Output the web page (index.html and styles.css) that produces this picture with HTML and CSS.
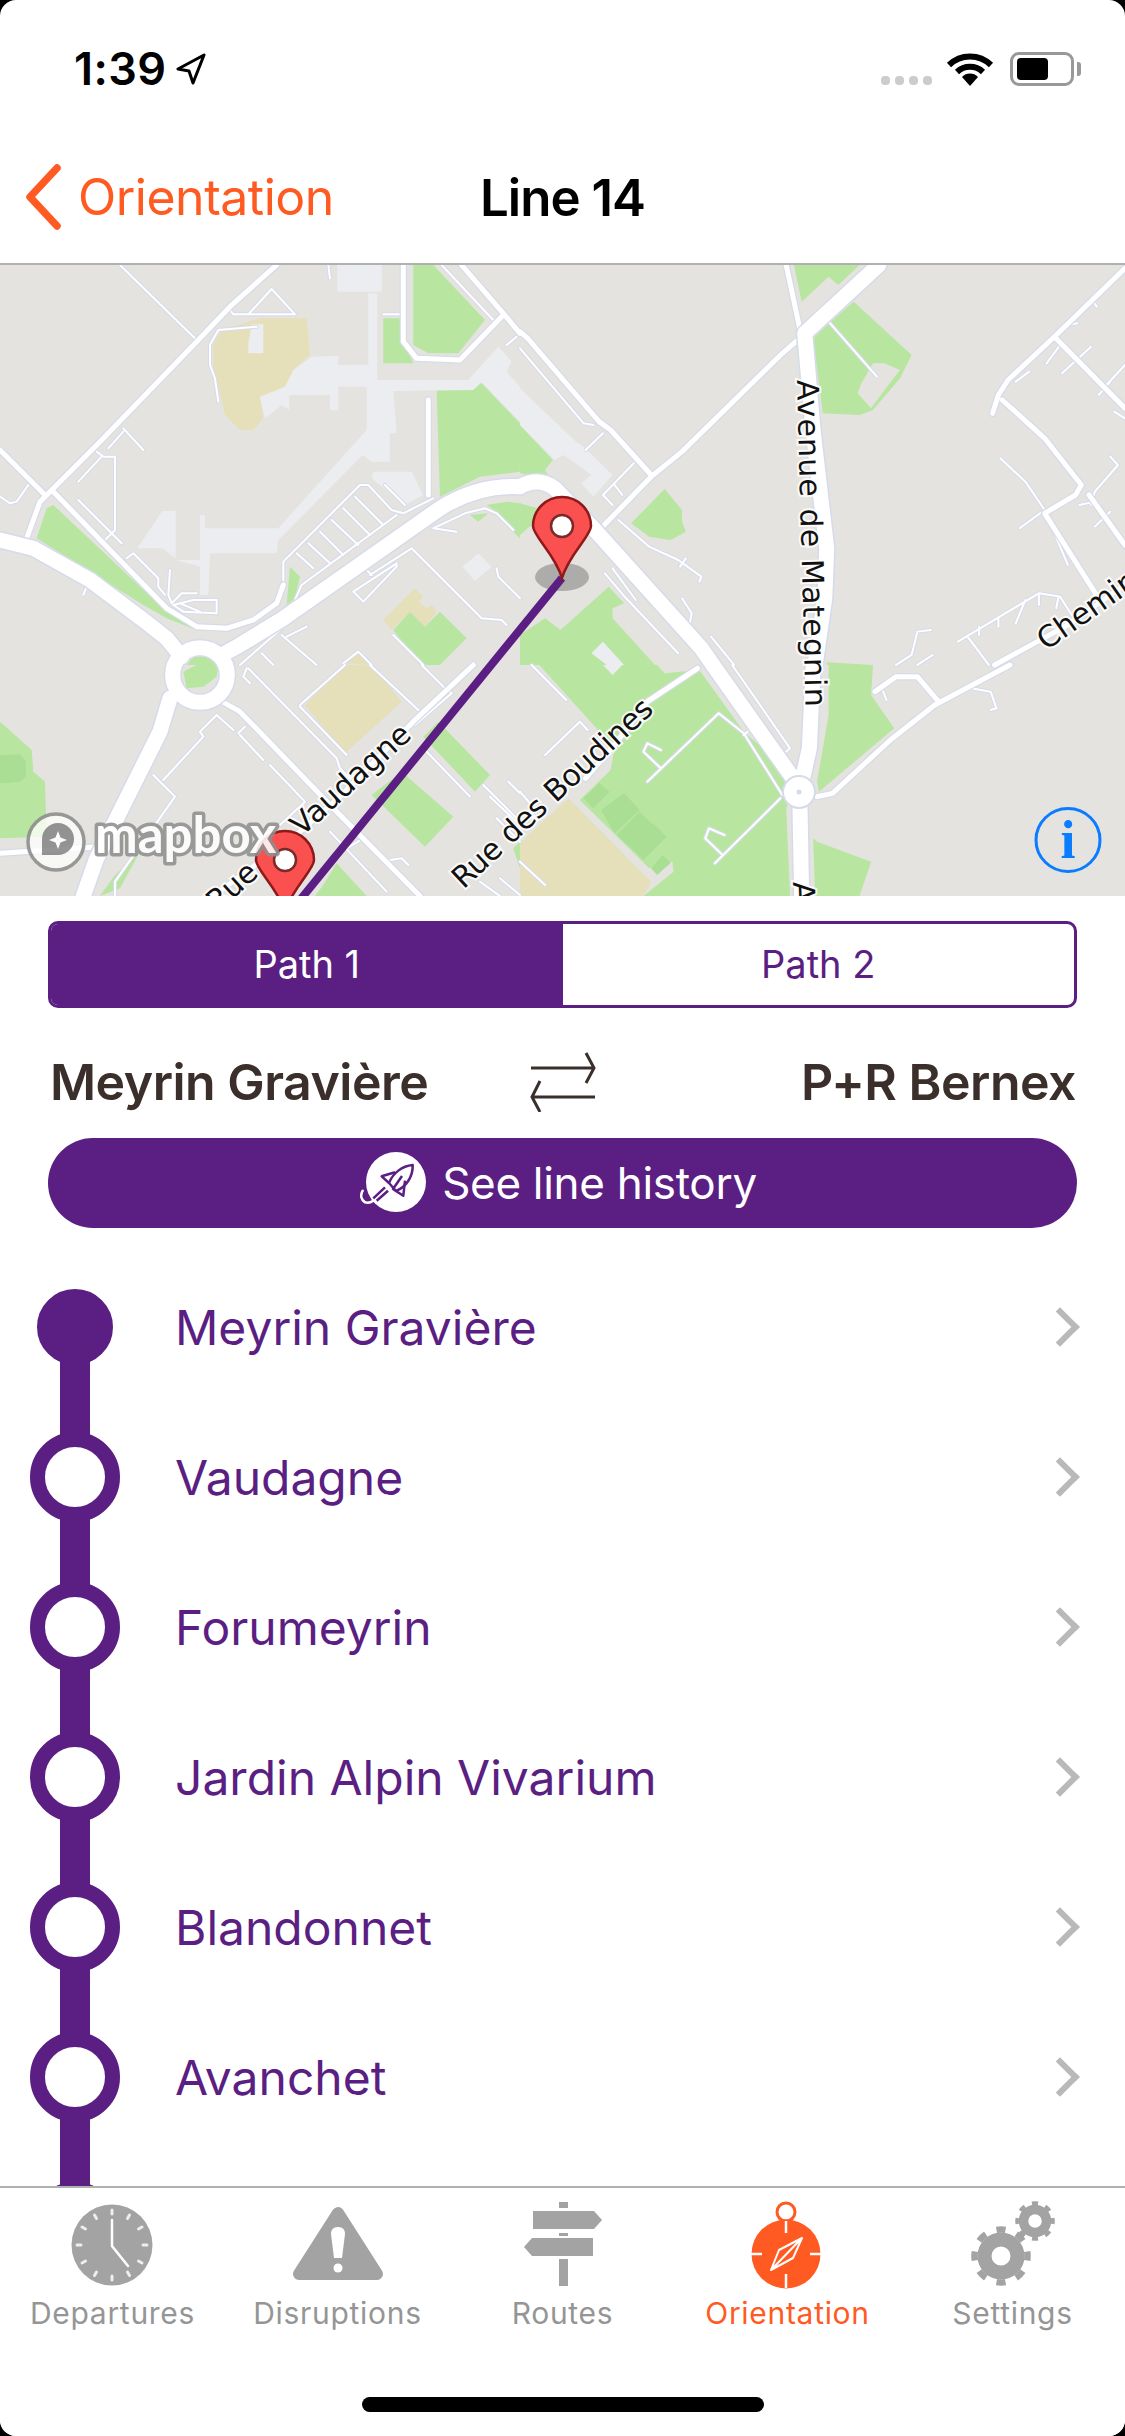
FILE: index.html
```html
<!DOCTYPE html>
<html lang="en">
<head>
<meta charset="utf-8">
<title>Line 14</title>
<link rel="stylesheet" href="styles.css">
</head>
<body>
<div class="screen">

<div class="status">
	<div class="clock">1:39
		<svg class="loc" width="30" height="32" viewBox="0 0 30 32"><path d="M28 2 2 16l11 2 4 12z" fill="none" stroke="#000" stroke-width="3" stroke-linejoin="round"/></svg>
	</div>
	<div class="status-right">
		<div class="signal"><i></i><i></i><i></i><i></i></div>
		<svg width="48" height="34" viewBox="0 0 48 34"><path d="M3 13a30 30 0 0 1 42 0" fill="none" stroke="#000" stroke-width="6"/><path d="M11 20a19 19 0 0 1 26 0" fill="none" stroke="#000" stroke-width="6"/><path d="M24 34 16 25a11 11 0 0 1 16 0z"/></svg>
		<div class="battery"><div class="battery-fill"></div></div>
		<div class="battery-nub"></div>
	</div>
</div>

<div class="nav">
	<div class="back">
		<svg width="40" height="66" viewBox="0 0 40 66"><path d="M33 4 6 33l27 29" fill="none" stroke="#ff5a22" stroke-width="7.500" stroke-linecap="round" stroke-linejoin="round"/></svg>
		<span>Orientation</span>
	</div>
	<div class="nav-title">Line 14</div>
</div>

<div class="map">
<svg width="1125" height="631" viewBox="0 0 1125 631">
	<defs>
		<g id="thin">
			<g class="q1">
				<path d="M360 0 590 225M745 148 815 72 885 148H700L690 135M985 0 990 40M1150 148H1210"/>
				<path d="M655 195 630 240V300L645 340 655 410M655 195 770 185"/>
				<path d="M370 490 430 555M370 500 325 550M290 560 310 575H345V795L315 825M305 575 235 650M235 705 365 835"/>
				<path d="M85 660 50 710 30 715 0 695M380 880 400 865 475 940V965L495 990M510 915 505 990 515 1015 545 985H590"/>
				<path d="M520 1020 550 1040 650 1045V1005H580L520 1020M540 1015 600 1040M260 965 250 990"/>
				<path d="M1155 660 1215 720M1065 695 1150 780M1030 730 1110 810M995 765 1075 840M960 800 1030 870M925 835 990 895M890 865 940 910"/>
				<path d="M905 960 1190 750M885 1005 905 960M1300 790 1395 745 1455 730 1490 745 1540 795M1300 790 1370 800"/>
				<path d="M860 1115 920 1085M845 1110 950 1200M785 1165 820 1200M720 1200 840 1095"/>
				<path d="M1235 850 1445 1060 1505 1065 1520 1080M1110 930 1235 850M1100 915 1115 930M1060 980 1190 895V905L1090 1010 1060 980"/>
				<path d="M1490 910 1495 935 1560 1000M1180 1110 1270 1200M1030 1195 1075 1160 1115 1200M1325 0 1480 165M1520 240 1550 215"/>
				<path d="M850 960V890L1080 660H1105L1175 735 1210 745 1300 700"/>
			</g>
			<g class="q2">
				<path d="M0 250 165 475 190 480M215 505 170 555M295 595 215 690 240 720M245 660 265 690"/>
				<path d="M255 765 335 845 410 885 470 935 465 950M430 880 415 905M800 170 925 335"/>
				<path d="M220 925 275 1000 410 1165M240 910 300 1005M420 1000 445 1045 440 1075M495 1115 555 1200"/>
				<path d="M1245 580 1310 650 1360 735 1295 790M1365 750 1420 900M1530 575 1550 600 1490 680 1480 720M1450 720 1490 710M1530 740 1490 785"/>
				<path d="M1568 300 1520 360M1480 100 1495 125M1420 180 1445 175M1480 245 1405 325M1400 240 1365 295M1320 320 1285 350M1500 390 1530 350M1568 460 1540 440"/>
				<path d="M1135 1130 1345 985 1400 995 1430 1050M1160 1115 1215 1200M1190 1110V1085M1240 1085V1060M1285 1075 1310 1005M1345 985V1020M1395 1000 1390 1030"/>
				<path d="M1065 1095 1030 1100 1015 1170 975 1200M1070 1170 1030 1200"/>
			</g>
			<g class="q3">
				<path d="M740 10 730 35 750 55M745 10 1010 280 1020 310 1060 350M1110 0 1255 135M1265 0 1330 65 1355 85 1245 180"/>
				<path d="M900 120 1035 0M900 125 1040 270M650 150 600 200 610 215 490 345M650 150 700 195M720 210 790 285M735 185 715 205"/>
				<path d="M810 300 915 410 840 480M460 330 525 395 345 650V693M1280 260 1410 395M1450 360 1560 470M1525 350 1560 385M1470 395 1560 480M1490 460 1560 530"/>
				<path d="M990 500 1160 680M1040 550 1090 520M1170 585 1205 580 1225 600M1440 650 1500 693M1500 640 1560 690"/>
			</g>
			<g class="q4">
				<path d="M30 0 120 105M155 170 65 270M155 170 175 195M515 145 330 350M515 145 580 205 680 390M590 200 580 210"/>
				<path d="M365 310 320 260 330 235 365 255M675 400 505 595M525 570 480 520 490 490 530 510M550 0 700 250 680 270"/>
				<path d="M1170 70 1220 80 1235 130 1220 135M940 75 950 105M0 380 30 420M0 590 65 660"/>
			</g>
		</g>
		<g id="medium">
			<g class="q1">
				<path d="M830 0 690 125 595 225 300 530 150 680 120 710 80 820M0 555 135 690M160 680 500 1030 590 1085 680 1090 760 1065 830 1015 850 960"/>
				<path d="M1210 0V230L1250 280 1380 285 1510 150M1385 0 1510 145 1560 205M1285 405V690"/>
			</g>
			<g class="q2">
				<path d="M0 200 20 220 205 470 235 495 340 630M720 225 680 265 420 560 340 635 210 790M690 0 725 190"/>
				<path d="M1568 10 1390 210 1265 345 1240 390 1225 445M1385 215 1568 430M1250 405 1360 520 1455 660 1440 690 1360 745 1500 1000M1475 690 1568 840"/>
				<path d="M1568 960 1420 1080 1230 1200"/>
			</g>
			<g class="q3">
				<path d="M640 95 720 140 1000 430 1260 693M1420 0 1240 170 1020 395 900 500 640 693M0 565 300 545"/>
			</g>
			<g class="q4">
				<path d="M1270 0 1075 120 960 225 810 385 770 395M920 80 975 35H1030L1085 110M460 10 330 110 245 240 170 340"/>
			</g>
		</g>
		<g id="thick">
			<g class="q1">
				<path d="M0 825 100 850 270 945 430 1065 500 1120 545 1175M1560 665C1480 660 1400 680 1320 730L850 1060 720 1140 665 1170"/>
			</g>
			<g class="q2">
				<path d="M0 665C30 645 60 645 90 670L190 790 470 1150 500 1200M930 0 738 205 760 500 795 850 790 1000 765 1200"/>
			</g>
			<g class="q3">
				<ellipse cx="600" cy="30" rx="82" ry="82"/>
				<path d="M510 100 480 200 370 420 290 580 250 693"/>
			</g>
			<g class="q4">
				<path d="M500 0 720 360M760 0 750 250 725 380 730 693"/>
			</g>
		</g>
	</defs>

	<rect width="1125" height="631" fill="#e4e3df"/>

	<g class="q1">
		<path class="g" d="M1240 0H1300L1455 165 1375 265H1285L1240 240zM1150 160H1205L1210 230 1240 295H1150z"/>
		<path class="g" d="M1310 375 1445 355 1560 475V620L1440 635 1320 695zM140 730 160 720 500 1040 590 1095 500 1060 430 1020 270 920 110 820z"/>
		<path class="g" d="M1410 750 1435 770 1465 745zM1460 720 1520 710 1560 715V820L1530 790 1490 740zM870 905 900 935 885 1000 860 1020z"/>
		<path class="g" d="M1180 1095 1230 1040 1275 1085 1320 1040 1400 1120 1320 1200H1260zM560 1200 590 1165 630 1170 650 1200z"/>
		<path class="s" d="M640 240 665 195 780 160H920L930 270 880 315V340L855 365 810 390 780 395 790 460 760 495H720L675 450 640 300z"/>
		<path class="s" d="M1150 1065 1245 970 1270 995 1255 1010 1280 1030 1295 1020 1310 1040 1275 1085 1230 1040 1175 1095zM1030 1195 1075 1160 1115 1200z"/>
		<path class="b" d="M1012 0H1145V80H1012zM745 235 755 178H790V265H745z"/>
		<path class="b" d="M780 395 855 365 880 315 935 275 1015 272V300H1105V85H1132V345H1405L1495 245 1535 290 1520 320 1560 365V470L1445 352 1420 375 1180 378 1190 505H1170V590H1115L1088 570 900 760 835 825 830 865H630L625 990H600V905L530 885H600V750H615V790H835L1100 495V365H1015V435H990V390H868V435L845 420 795 460z"/>
		<path class="b" d="M487 738H527V880L487 850H412zM1120 620H1235L1270 690 1215 720 1115 640zM1388 905 1435 865 1475 905 1425 948z"/>
	</g>
	<g class="q2">
		<path class="g" d="M710 0H880L825 60 800 35 730 110zM865 110 1015 270 985 340 915 435 880 450 785 445 760 220 805 170z"/>
		<path class="g" d="M375 672 420 735V770L430 800 390 825 335 815 288 775zM0 480 85 585 65 615 85 650 0 625zM0 715 45 730 30 780 0 810z"/>
		<path class="g" d="M230 965 270 1015 240 1030V1060L350 1200H0V1110L65 1060 105 1095zM795 1192 915 1200H795z"/>
		<path class="p" d="M875 385 885 355 915 295H945L985 315 945 375 910 430z"/>
		<path class="b" d="M0 370 145 530 165 545 240 630 190 695 158 655 185 630 150 600 112 570 90 585 0 480zM215 1130 185 1165 225 1200H270z"/>
	</g>
	<g class="q3">
		<path class="g" d="M0 170 95 255 100 320 135 350 140 515 0 520zM550 20 590 0H655L650 35 610 65 560 70z"/>
		<path class="d" d="M0 270 60 268 78 290V335L60 350 0 355z"/>
		<path class="g" d="M1270 215 1315 170 1470 330 1425 380zM1115 390 1205 320 1360 455 1275 545zM970 660 1010 595 1100 693H945zM1540 550 1560 530V610zM345 630 420 560 360 670 300 693z"/>
		<path class="s" d="M915 120 1040 0H1115L1205 110 1035 265z"/>
	</g>
	<g class="q4">
		<path class="g" d="M50 0H355L375 25 465 15 580 200 720 340 690 430 700 693H320L398 620 395 590 335 610 155 405 235 315 245 250z"/>
		<path class="g" d="M800 0H915L910 90 970 190 775 380 770 350 800 150zM770 530 910 590 880 693H765L760 520z"/>
		<path class="d" d="M165 400 205 355 232 380 190 430zM210 435 270 385 310 435 245 505zM250 510 310 440 345 480 285 545zM285 545 345 475 380 515 320 585zM340 610 370 570 390 595 355 630z"/>
		<path class="s" d="M0 535 125 400 340 650 320 693H0z"/>
		<path class="b" d="M215 0H265L240 30z"/>
	</g>

	<use href="#thin" class="thin-case"/>
	<use href="#thin" class="thin-line"/>
	<use href="#medium" class="medium-case"/>
	<use href="#medium" class="medium-line"/>
	<use href="#thick" class="thick-case"/>
	<use href="#thick" class="thick-line"/>

	<circle cx="799" cy="527" r="17" fill="#d6dbea"/>
	<circle cx="799" cy="527" r="15" fill="#fff"/>
	<circle cx="799" cy="527" r="2.500" fill="#d6dbea"/>

	<text class="label" transform="translate(797 115) rotate(88.500)" textLength="327">Avenue de Mategnin</text>
	<text class="label" transform="translate(793 617) rotate(88)">A</text>
	<text class="label" transform="translate(1046 386) rotate(-35)">Chemin</text>
	<text class="label" text-anchor="end" transform="translate(655 446) rotate(-43)" textLength="262">Rue des Boudines</text>
	<text class="label" text-anchor="end" transform="translate(413 472) rotate(-42)">Rue de Vaudagne</text>

	<ellipse cx="562" cy="312" rx="27" ry="14" fill="#555" opacity=".38"/>
	<path d="M562 313 287 651" stroke="#5b1e82" stroke-width="8"/>
	<path class="pin" d="M562 313c-7-24-29-42-29-52a29 29 0 0 1 58 0c0 10-22 28-29 52z"/>
	<circle class="pin-hole" cx="562" cy="261" r="11"/>
	<path class="pin" d="M285 647c-7-24-29-42-29-52a29 29 0 0 1 58 0c0 10-22 28-29 52z"/>
	<circle class="pin-hole" cx="285" cy="595" r="11"/>

	<g opacity=".9">
		<circle cx="56" cy="577" r="28" fill="#fff" fill-opacity=".85" stroke="#8f8f8f" stroke-width="3.500"/>
		<path d="M42 590V574a16 16 0 1 1 16 16z" fill="#8a8a8a"/>
		<path d="M58 566l2.500 6.500L67 575l-6.500 2.500L58 584l-2.500-6.500L49 575l6.500-2.500z" fill="#fff"/>
	</g>
	<text class="mapbox" x="95" y="588">mapbox</text>

	<ellipse cx="1068" cy="575" rx="32" ry="31.500" fill="none" stroke="#0a7cff" stroke-width="3"/>
	<text class="info" x="1068" y="593">i</text>
</svg>
</div>

<div class="segment">
	<div class="seg seg-on">Path 1</div>
	<div class="seg">Path 2</div>
</div>

<div class="dirs">
	<div>Meyrin Gravière</div>
	<svg class="swap" width="68" height="60" viewBox="0 0 68 60"><path d="M2 16h64M57 1l8 15-8 15M66 45H2M11 29 3 45l8 15" fill="none" stroke="#3b2f2c" stroke-width="3"/></svg>
	<div>P+R Bernex</div>
</div>

<div class="history">
	<svg width="68" height="64" viewBox="0 0 68 64">
		<circle cx="36" cy="31" r="30" fill="#fff"/>
		<g fill="none" stroke="#5b1e82" stroke-width="2.500" stroke-linejoin="round">
			<path d="M52.700 14C42 15 33 22 29 32l7 8c10-4 17-14 16.700-26z"/>
			<path d="M29 32l-7.300-6.700L35 21.300M36 40l7.300 4.700L45 29.700M36 40l-3-2 9-13"/>
			<path d="M25 36.300 13.300 47.300M28 39.700 16.700 49.700"/>
		</g>
		<path d="M2.700 39.700C0 44 1 49 5 51.300c3 1 6 0 8.300-1.600" fill="none" stroke="#fff" stroke-width="2.500" stroke-linecap="round"/>
	</svg>
	<span>See line history</span>
</div>

<div class="stops">
	<div class="stop stop-first"><div class="dot"></div><span class="stop-name">Meyrin Gravière</span><span class="chev"></span></div>
	<div class="stop"><div class="dot"></div><span class="stop-name">Vaudagne</span><span class="chev"></span></div>
	<div class="stop"><div class="dot"></div><span class="stop-name">Forumeyrin</span><span class="chev"></span></div>
	<div class="stop"><div class="dot"></div><span class="stop-name">Jardin Alpin Vivarium</span><span class="chev"></span></div>
	<div class="stop"><div class="dot"></div><span class="stop-name">Blandonnet</span><span class="chev"></span></div>
	<div class="stop"><div class="dot"></div><span class="stop-name">Avanchet</span><span class="chev"></span></div>
	<div class="stop"><div class="dot"></div></div>
</div>

<div class="tabbar">
	<div class="tabs">
		<div class="tab">
			<svg width="100" height="90" viewBox="0 0 100 90">
				<circle cx="49" cy="45" r="40.500" fill="#a3a3a3"/>
				<g stroke="#eee" stroke-width="3" stroke-linecap="round">
					<path d="M49 10v4M49 76v4M14 45h4M80 45h4M31.500 15l2 3.500M64.500 72l2 3.500M19 27l3.500 2M75.500 61l3.500 2M66.500 15l-2 3.500M33.500 72l-2 3.500M79 27l-3.500 2M22.500 61l-3.500 2"/>
				</g>
				<path d="M49 20v26l16 20" fill="none" stroke="#fff" stroke-width="2.500" stroke-linecap="round"/>
			</svg>
			<span>Departures</span>
		</div>
		<div class="tab">
			<svg width="100" height="90" viewBox="0 0 100 90">
				<path d="M50 13 89 74H11z" fill="#a3a3a3" stroke="#a3a3a3" stroke-width="12" stroke-linejoin="round"/>
				<path d="M50 27c-5 0-7 3-7 7l3 24h8l3-24c0-4-2-7-7-7z" fill="#fff"/>
				<circle cx="50" cy="68" r="4.500" fill="#fff"/>
			</svg>
			<span>Disruptions</span>
		</div>
		<div class="tab">
			<svg width="100" height="90" viewBox="0 0 100 90">
				<g fill="#a3a3a3">
					<path d="M46 2h9v6h-9zM46 33h9v3h-9zM46 59h9v27h-9z"/>
					<path d="M20 11h61l8 9-8 9H20z"/>
					<path d="M19 38h61v18H19l-8-9z"/>
				</g>
			</svg>
			<span>Routes</span>
		</div>
		<div class="tab tab-on">
			<svg width="100" height="90" viewBox="0 0 100 90">
				<circle cx="48" cy="54" r="34.500" fill="#ff5a22"/>
				<circle cx="48" cy="12" r="9" fill="none" stroke="#ff5a22" stroke-width="3"/>
				<path d="M48 21v12M48 74v14M13 54h11M72 54h11" stroke="#fff" stroke-width="2.500" fill="none"/>
				<path d="M64 38 33 70 M64 38 55 58 33 70 41 50z" fill="none" stroke="#fff" stroke-width="2" stroke-linejoin="round"/>
			</svg>
			<span>Orientation</span>
		</div>
		<div class="tab">
			<svg width="100" height="90" viewBox="0 0 100 90">
				<g fill="none" stroke="#a3a3a3">
					<circle cx="38" cy="56" r="16.500" stroke-width="14"/>
					<circle cx="38" cy="56" r="26.500" stroke-width="6.500" pathLength="80" stroke-dasharray="4.500 5.500" stroke-dashoffset="2.250"/>
					<circle cx="72" cy="21" r="11.500" stroke-width="9.500"/>
					<circle cx="72" cy="21" r="17.500" stroke-width="4.500" pathLength="80" stroke-dasharray="4.500 5.500" stroke-dashoffset="2.250"/>
				</g>
			</svg>
			<span>Settings</span>
		</div>
	</div>
	<div class="home"></div>
</div>

</div>
</body>
</html>
```

FILE: styles.css
```css
body {
	margin: 0;
	background: #000;
	font-family: Inter, "Noto Sans", sans-serif;
}
.screen {
	width: 1125px;
	height: 2436px;
	background: #fff;
	border-radius: 16px;
	overflow: hidden;
	display: flex;
	flex-direction: column;
}

/* status bar */
.status {
	height: 100px;
	flex: none;
	display: flex;
	justify-content: space-between;
	padding: 42px 44px 0 74px;
	box-sizing: border-box;
}
.clock {
	display: flex;
	align-items: flex-start;
	gap: 12px;
	font-size: 45px;
	font-weight: 600;
	line-height: 54px;
	letter-spacing: .4px;
}
.loc {
	margin-top: 11px;
	margin-left: -2px;
}
.status-right {
	display: flex;
	align-items: flex-start;
	padding-top: 10px;
}
.signal {
	display: flex;
	gap: 5px;
	margin: 24px 14px 0 0;
}
.signal i {
	width: 9px;
	height: 9px;
	border-radius: 4px;
	background: #ccc;
}
.battery {
	width: 64px;
	height: 34px;
	margin-left: 16px;
	box-sizing: border-box;
	border: 3px solid #999;
	border-radius: 9px;
	padding: 3px 4px;
}
.battery-fill {
	width: 31px;
	height: 22px;
	background: #000;
	border-radius: 4px;
}
.battery-nub {
	width: 4px;
	height: 14px;
	margin: 10px 0 0 3px;
	background: #999;
	border-radius: 0 3px 3px 0;
}

/* nav */
.nav {
	height: 165px;
	flex: none;
	box-sizing: border-box;
	border-bottom: 2px solid #b0b0b0;
	display: flex;
	align-items: center;
	justify-content: center;
	position: relative;
}
.back {
	position: absolute;
	left: 24px;
	top: 64px;
	display: flex;
	align-items: center;
	gap: 14px;
	color: #ff5a22;
	font-size: 50px;
	line-height: 66px;
	letter-spacing: -.5px;
}
.nav-title {
	font-size: 51px;
	font-weight: 600;
	letter-spacing: -1px;
	margin-top: 32px;
}

/* map */
.map {
	height: 631px;
	flex: none;
	overflow: hidden;
}
.map svg {
	display: block;
}
.map path, .map ellipse {
	vector-effect: non-scaling-stroke;
}
.q1 {
	transform: matrix(.3333, 0, 0, .3333, 0, 0);
}
.q2 {
	transform: matrix(.3858, 0, 0, .3333, 520, 0);
}
.q3 {
	transform: matrix(.3333, 0, 0, .3333, 0, 400);
}
.q4 {
	transform: matrix(.3858, 0, 0, .3333, 520, 400);
}
.g {
	fill: #b8e6a0;
}
.d {
	fill: #a9de94;
}
.s {
	fill: #e5dfba;
}
.b {
	fill: #ecedf0;
}
.p {
	fill: #e4e3df;
}
.thin-case, .thin-line, .medium-case, .medium-line, .thick-case, .thick-line {
	fill: none;
	stroke-linecap: round;
	stroke-linejoin: round;
}
.thin-case {
	stroke: #d6dbea;
	stroke-width: 4;
}
.thin-line {
	stroke: #fff;
	stroke-width: 2;
}
.medium-case {
	stroke: #d6dbea;
	stroke-width: 7.500;
}
.medium-line {
	stroke: #fff;
	stroke-width: 5;
}
.thick-case {
	stroke: #d6dbea;
	stroke-width: 18;
}
.thick-line {
	stroke: #fff;
	stroke-width: 15;
}
.label {
	font-family: "DejaVu Sans", sans-serif;
	font-size: 30px;
	fill: #111;
	stroke: #fff;
	stroke-opacity: .85;
	stroke-width: 4px;
	paint-order: stroke;
}
.pin {
	fill: #fb5050;
	stroke: #8f1818;
	stroke-width: 2.500;
}
.pin-hole {
	fill: #fff;
	stroke: #7a2a2a;
	stroke-width: 2.500;
}
.mapbox {
	font-family: Lato, sans-serif;
	font-size: 51px;
	font-weight: 700;
	fill: #fff;
	stroke: #8f8f8f;
	stroke-width: 7px;
	stroke-linejoin: round;
	paint-order: stroke;
	opacity: .88;
}
.info {
	font-family: "Liberation Serif", serif;
	font-size: 54px;
	font-weight: 700;
	fill: #0a7cff;
	text-anchor: middle;
}

/* path switch */
.segment {
	flex: none;
	display: flex;
	box-sizing: border-box;
	height: 87px;
	margin: 25px 48px 0;
	border: 3px solid #5b1e82;
	border-radius: 10px;
	overflow: hidden;
}
.seg {
	flex: 1;
	text-align: center;
	font-size: 38px;
	line-height: 81px;
	color: #5b1e82;
}
.seg-on {
	background: #5b1e82;
	color: #fff;
}

.dirs {
	flex: none;
	height: 130px;
	margin: 0 49px 0 50px;
	padding-top: 18px;
	box-sizing: border-box;
	display: flex;
	align-items: center;
	justify-content: space-between;
	color: #3b2f2c;
	font-size: 50px;
	font-weight: 600;
	letter-spacing: -.5px;
}
.dirs div {
	width: 420px;
}
.dirs div:last-child {
	text-align: right;
}

.history {
	flex: none;
	height: 90px;
	margin: 0 48px;
	padding-right: 8px;
	box-sizing: border-box;
	border-radius: 45px;
	background: #5b1e82;
	color: #fff;
	font-size: 44px;
	letter-spacing: -.3px;
	display: flex;
	align-items: center;
	justify-content: center;
	gap: 14px;
}

/* stops */
.stops {
	flex: 1;
	min-height: 0;
	margin-top: 24px;
	overflow: hidden;
}
.stop {
	height: 150px;
	flex: none;
	display: flex;
	align-items: center;
	position: relative;
	padding-left: 175px;
	padding-right: 45px;
	color: #5b1e82;
	font-size: 48px;
}
.stop:before {
	content: "";
	position: absolute;
	left: 60px;
	top: 0;
	bottom: 0;
	width: 30px;
	background: #5b1e82;
}
.stop-first:before {
	top: 75px;
}
.stop-name {
	flex: 1;
}
.dot {
	position: absolute;
	left: 30px;
	top: 30px;
	width: 90px;
	height: 90px;
	box-sizing: border-box;
	border: 15px solid #5b1e82;
	border-radius: 50%;
	background: #fff;
}
.stop-first .dot {
	left: 37px;
	top: 37px;
	width: 76px;
	height: 76px;
	background: #5b1e82;
}
.chev {
	width: 22px;
	height: 22px;
	border-top: 6px solid #b9b9b9;
	border-right: 6px solid #b9b9b9;
	transform: rotate(45deg);
	margin-right: 6px;
}

/* tab bar */
.tabbar {
	height: 250px;
	flex: none;
	box-sizing: border-box;
	border-top: 2px solid #b0b0b0;
	background: #fff;
	display: flex;
	flex-direction: column;
}
.tabs {
	display: flex;
	padding-top: 12px;
}
.tab {
	width: 225px;
	display: flex;
	flex-direction: column;
	align-items: center;
	color: #959595;
	font-size: 30px;
	line-height: 36px;
	letter-spacing: .7px;
}
.tab span {
	margin-top: 5px;
}
.tab-on {
	color: #ff5a22;
}
.home {
	width: 402px;
	height: 15px;
	border-radius: 8px;
	background: #000;
	margin: 66px auto 0;
}
```
